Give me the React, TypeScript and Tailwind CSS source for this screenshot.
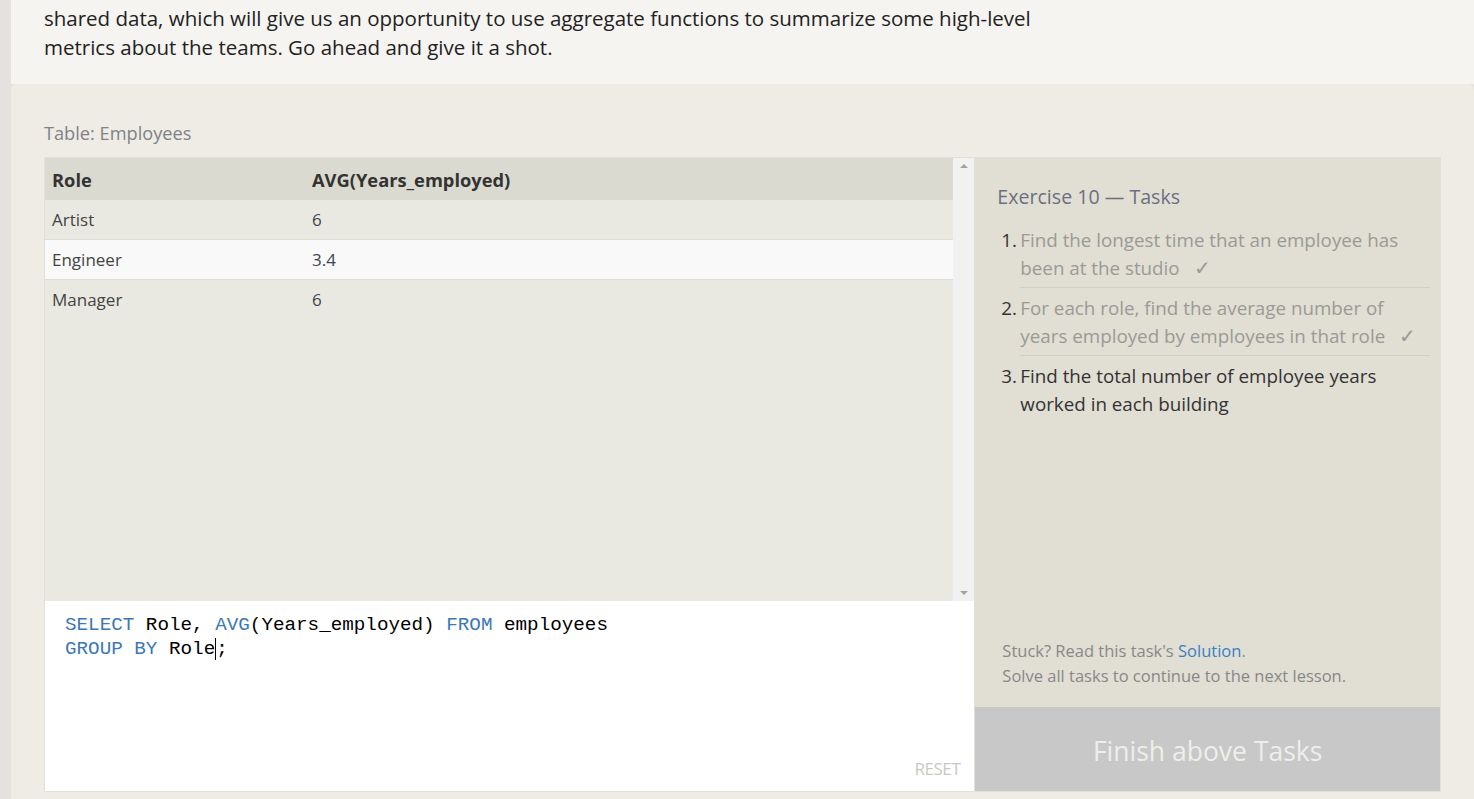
import React from "react";

type Row = { role: string; avg: string; hi?: boolean };

const rows: Row[] = [
  { role: "Artist", avg: "6" },
  { role: "Engineer", avg: "3.4", hi: true },
  { role: "Manager", avg: "6" },
];

const tasks = [
  { lines: ["Find the longest time that an employee has", "been at the studio"], done: true },
  { lines: ["For each role, find the average number of", "years employed by employees in that role"], done: true },
  { lines: ["Find the total number of employee years", "worked in each building"], done: false },
];

const ui = "font-['Open_Sans',sans-serif]";
const mono = "font-['Liberation_Mono',monospace]";

export default function App() {
  return (
    <div className={`flex min-h-[799px] bg-[#e5e1df] ${ui}`}>
      <div className="ml-[11px] flex flex-1 flex-col">
        {/* intro text */}
        <div className="h-[84px] bg-[#f5f4f0] pl-[33px] pt-[4px]">
          <p className="text-[20.5px] leading-[29px] text-[#222]">
            shared data, which will give us an opportunity to use aggregate functions to summarize some high-level
            <br />
            metrics about the teams. Go ahead and give it a shot.
          </p>
        </div>

        {/* exercise */}
        <div className="flex-1 rounded-tl-[6px] rounded-tr-[6px] bg-[#efece5] pl-[33px] pt-[37px]">
          <div className="mb-[12px] text-[18.2px] leading-[24px] text-[#7f8288]">Table: Employees</div>

          <div className="flex h-[635px] w-[1397px] border border-[#e3e0d8]">
            {/* left: table + editor */}
            <div className="flex w-[930px] flex-col">
              <div className="flex h-[443px] bg-[#eae9e1]">
                <div className="flex-1">
                  <div className="flex h-[42px] items-center bg-[#dbdad0] pt-[2px] text-[18.3px] font-bold text-[#333]">
                    <div className="w-[259px] pl-[7px]">Role</div>
                    <div className="pl-[8px]">AVG(Years_employed)</div>
                  </div>
                  {rows.map((r, i) => (
                    <div
                      key={r.role}
                      className={`flex h-[40px] items-center text-[17px] text-[#444] ${
                        i < rows.length - 1 ? "border-b border-[#dedcd4]" : ""
                      } ${r.hi ? "bg-[#f9f9f9]" : "bg-[#eae9e1]"}`}
                    >
                      <div className="w-[259px] pl-[7px]">{r.role}</div>
                      <div className="pl-[8px] text-[#3d4654]">{r.avg}</div>
                    </div>
                  ))}
                </div>
                {/* scrollbar */}
                <div className="flex w-[21px] flex-col items-center justify-between bg-[#f1f1f1] py-[6px]">
                  <div className="h-0 w-0 border-x-[4px] border-b-[4px] border-x-transparent border-b-[#a3a3a3]" />
                  <div className="h-0 w-0 border-x-[4px] border-t-[4px] border-x-transparent border-t-[#a3a3a3]" />
                </div>
              </div>

              <div className="flex flex-1 flex-col bg-white pl-[20px] pt-[12px]">
                <pre className={`${mono} text-[19.25px] leading-[24px] text-black`}>
                  <span className="text-[#3b78b5]">SELECT</span> Role, <span className="text-[#3b78b5]">AVG</span>(Years_employed) <span className="text-[#3b78b5]">FROM</span> employees
                  {"\n"}
                  <span className="text-[#3b78b5]">GROUP BY</span> Role<span className="border-l border-black" />;
                </pre>
                <div className="mt-auto flex justify-end pb-[10px] pr-[14px]">
                  <span className="text-[17px] uppercase tracking-tight text-[#c9c9c4]">Reset</span>
                </div>
              </div>
            </div>

            {/* right: tasks */}
            <div className="flex w-[466px] flex-col border-l border-[#e3e0d8]">
              <div className="flex flex-1 flex-col bg-[#e1ded4] pl-[22px] pr-[10px] pt-[25px]">
                <div className="text-[19.6px] leading-[28px] text-[#6b7080]">Exercise 10 — Tasks</div>
                <ol className="mt-[15px]">
                  {tasks.map((t, i) => {
                    const pt = i === 0 ? "pt-0" : "pt-[6px]";
                    return (
                      <li key={i} className="flex text-[18.8px] leading-[28px]">
                        <span className={`w-[23px] shrink-0 pl-[4px] text-[#333] ${pt}`}>{i + 1}.</span>
                        <div
                          className={`flex-1 pb-[5px] ${pt} ${
                            i < tasks.length - 1 ? "border-b border-[#d3d0c6]" : ""
                          } ${t.done ? "text-[#9a9a96]" : "text-[#333]"}`}
                        >
                          {t.lines[0]}
                          <br />
                          {t.lines[1]}
                          {t.done && <span className="ml-[14px] text-[20px]">✓</span>}
                        </div>
                      </li>
                    );
                  })}
                </ol>
                <div className="mt-auto pb-[19px] pl-[5px] text-[16.5px] leading-[25px] text-[#888]">
                  <div>
                    Stuck? Read this task's <span className="text-[#3a7fc4]">Solution</span>.
                  </div>
                  <div>Solve all tasks to continue to the next lesson.</div>
                </div>
              </div>
              <div className="flex h-[84px] items-center justify-center bg-[#c8c8c8] pt-[5px] text-[26.5px] text-[#eeeeea]">
                Finish above Tasks
              </div>
            </div>
          </div>
        </div>
      </div>
    </div>
  );
}
